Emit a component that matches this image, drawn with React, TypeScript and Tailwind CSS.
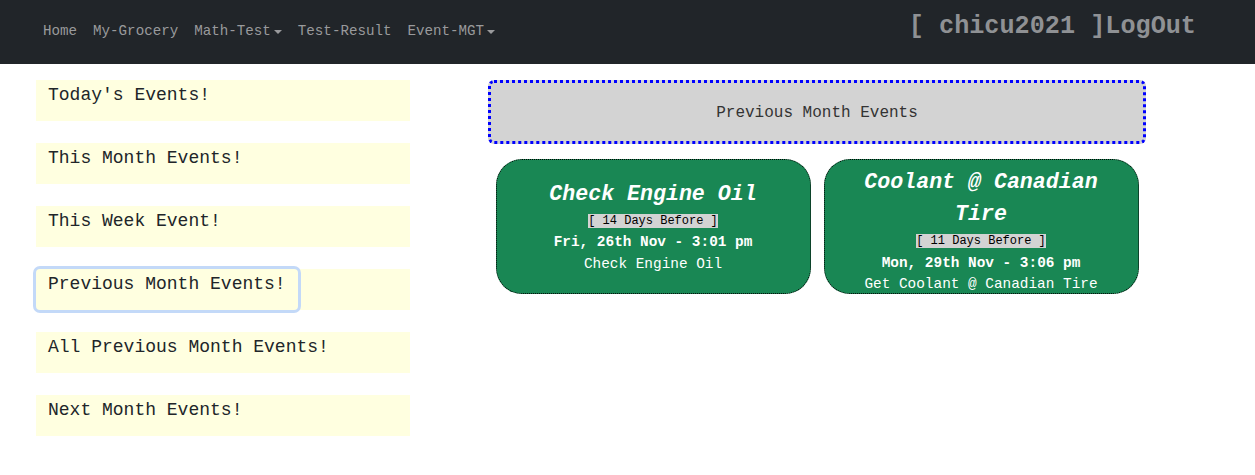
import React from 'react';

const NAV_LINKS = [
  { label: 'Home', dropdown: false },
  { label: 'My-Grocery', dropdown: false },
  { label: 'Math-Test', dropdown: true },
  { label: 'Test-Result', dropdown: false },
  { label: 'Event-MGT', dropdown: true },
];

const SIDE_ITEMS = [
  "Today's Events!",
  'This Month Events!',
  'This Week Event!',
  'Previous Month Events!',
  'All Previous Month Events!',
  'Next Month Events!',
];

const EVENTS = [
  {
    title: 'Check Engine Oil',
    before: '[ 14 Days Before ]',
    when: 'Fri, 26th Nov - 3:01 pm',
    desc: 'Check Engine Oil',
  },
  {
    title: 'Coolant @ Canadian Tire',
    before: '[ 11 Days Before ]',
    when: 'Mon, 29th Nov - 3:06 pm',
    desc: 'Get Coolant @ Canadian Tire',
  },
];

function Navbar() {
  return (
    <nav className="flex h-16 items-start justify-between bg-[#212529]">
      {/* left: links */}
      <ul className="flex pl-[35px] pt-[21px]">
        {NAV_LINKS.map((l) => (
          <li key={l.label}>
            <a className="flex items-center px-2 text-[14.2px] leading-[21px] text-[#999a9c]">
              {l.label}
              {l.dropdown && (
                <span className="ml-[3px] inline-block h-0 w-0 border-x-[4px] border-t-[4.5px] border-x-transparent border-t-[#999a9c]" />
              )}
            </a>
          </li>
        ))}
      </ul>

      {/* right: user + logout */}
      <div className="pr-[59px] pt-[11px] text-[25.2px] font-bold leading-[32px] text-[#8f9194]">
        <span>[ chicu2021 ]</span>
        <a>LogOut</a>
      </div>
    </nav>
  );
}

function SideMenu() {
  return (
    <div className="flex w-[374px] flex-col gap-[22px]">
      {SIDE_ITEMS.map((item) => {
        const focused = item === 'Previous Month Events!';
        return (
          <div key={item} className="h-[41px] bg-[#ffffe0]">
            <button
              className={[
                'h-[41px] px-3 pb-[11px] text-left align-top text-[18px] leading-[27px] text-[#212529]',
                focused ? 'rounded-[4px] ring-[3px] ring-[#c3d9f8]' : '',
              ].join(' ')}
            >
              {item}
            </button>
          </div>
        );
      })}
    </div>
  );
}

function EventCard({ ev }: { ev: (typeof EVENTS)[number] }) {
  return (
    <div className="flex h-[135px] w-[315px] flex-col rounded-[26px] border border-dotted border-black bg-[#198754] px-4 py-[6px] text-center text-white">
      <div className="my-auto">
        <div className="text-[21.6px] font-bold italic leading-[32px]">{ev.title}</div>
        <div className="text-[14.4px] leading-[21.6px]">
          <span className="bg-[#d3d3d3] text-[12px] text-black">{ev.before}</span>
        </div>
        <div className="text-[14.4px] font-bold leading-[21.6px]">{ev.when}</div>
        <div className="text-[14.4px] leading-[21.6px]">{ev.desc}</div>
      </div>
    </div>
  );
}

export default function App() {
  return (
    <div className="min-h-[475px] bg-white font-['Liberation_Mono','Courier_New',monospace]">
      <Navbar />
      <main className="flex pl-[36px] pt-4">
        <SideMenu />
        <section className="ml-[78px] w-[658px]">
          <div className="flex h-[64px] items-center justify-center rounded-[6px] border-[3px] border-dotted border-[#0000ff] bg-[#d3d3d3] pt-[1px] text-[16px] text-[#333]">
            Previous Month Events
          </div>
          <div className="mt-[15px] flex justify-center gap-[13px]">
            {EVENTS.map((ev) => (
              <EventCard key={ev.title} ev={ev} />
            ))}
          </div>
        </section>
      </main>
    </div>
  );
}
